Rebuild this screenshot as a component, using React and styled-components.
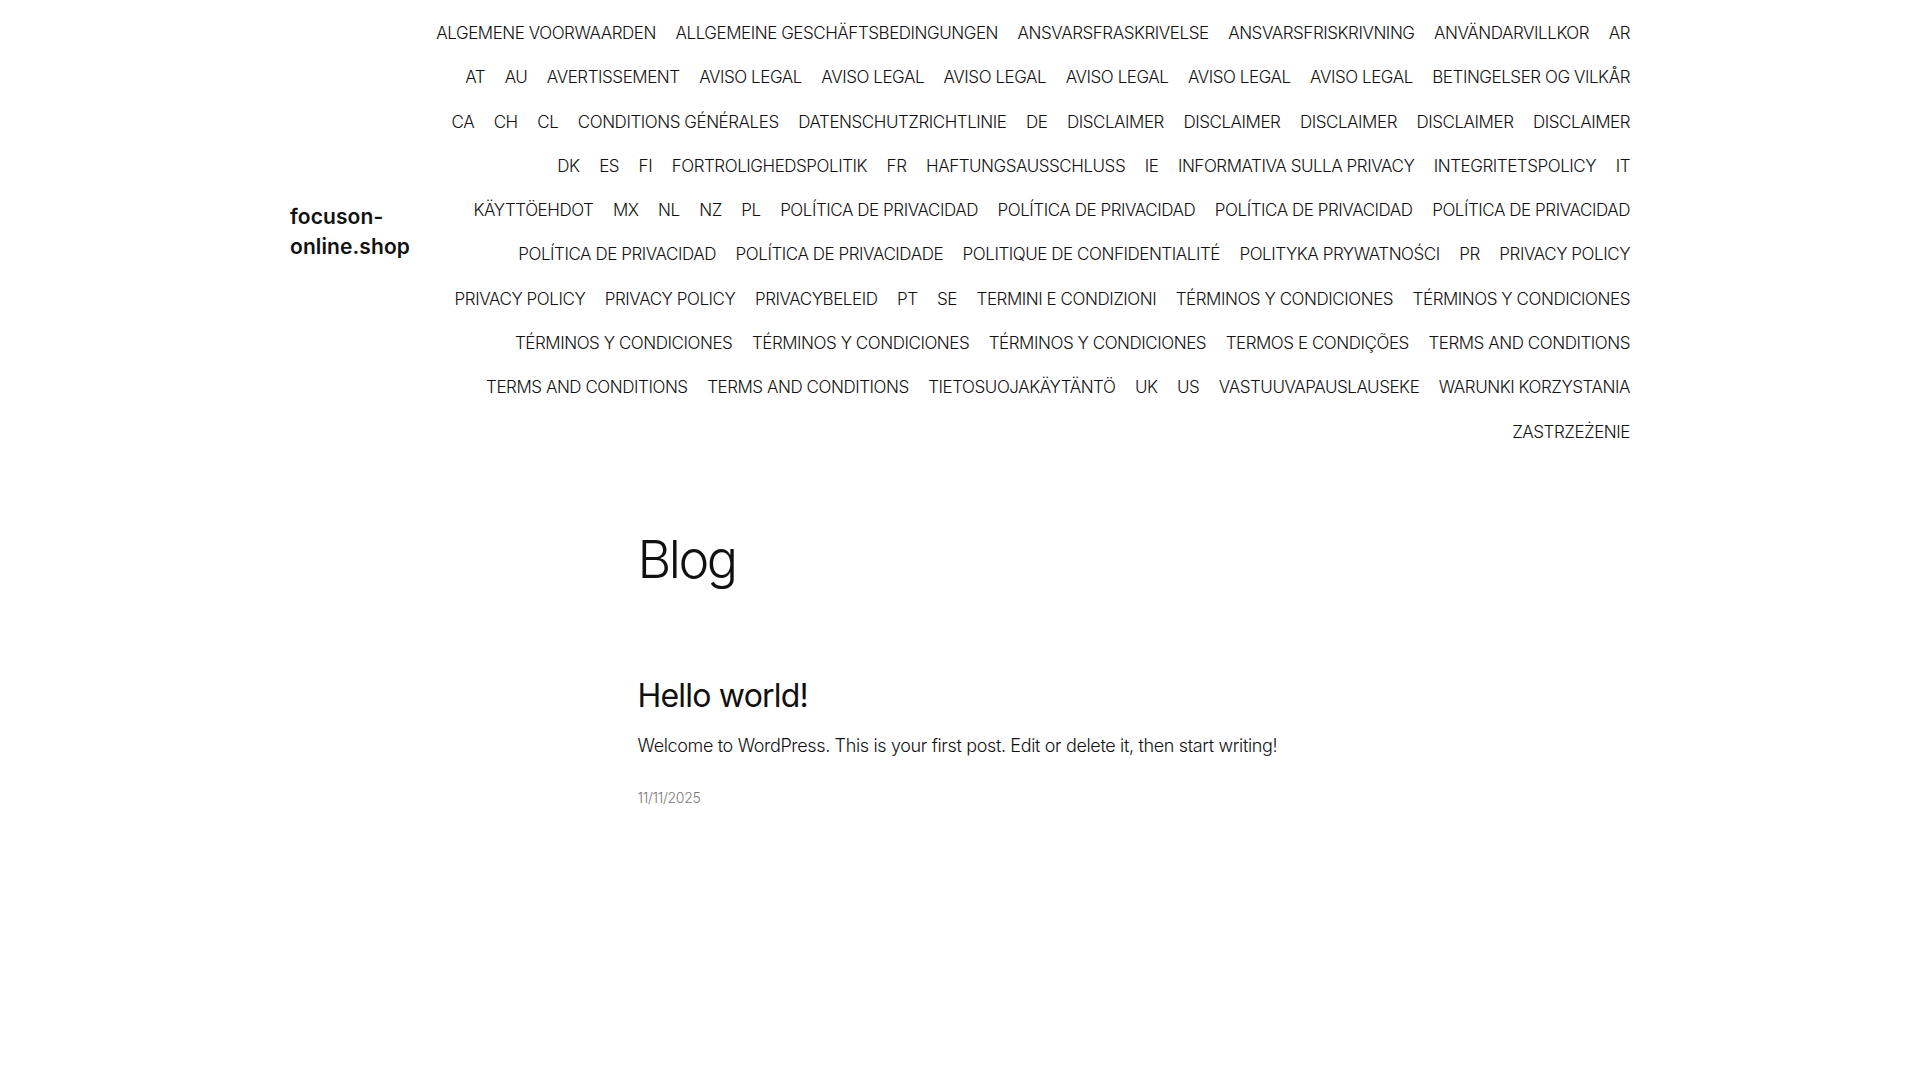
import React from 'react';
import styled, { createGlobalStyle } from 'styled-components';

const GlobalStyle = createGlobalStyle`
    html, body {
        margin: 0;
        padding: 0;
        background: #ffffff;
    }
    body {
        font-family: Inter, "Noto Sans", "DejaVu Sans", sans-serif;
        color: #111111;
    }
    a {
        color: inherit;
        text-decoration: none;
    }
`

const navRows = [
    ['ALGEMENE VOORWAARDEN', 'ALLGEMEINE GESCHÄFTSBEDINGUNGEN', 'ANSVARSFRASKRIVELSE', 'ANSVARSFRISKRIVNING', 'ANVÄNDARVILLKOR', 'AR'],
    ['AT', 'AU', 'AVERTISSEMENT', 'AVISO LEGAL', 'AVISO LEGAL', 'AVISO LEGAL', 'AVISO LEGAL', 'AVISO LEGAL', 'AVISO LEGAL', 'BETINGELSER OG VILKÅR'],
    ['CA', 'CH', 'CL', 'CONDITIONS GÉNÉRALES', 'DATENSCHUTZRICHTLINIE', 'DE', 'DISCLAIMER', 'DISCLAIMER', 'DISCLAIMER', 'DISCLAIMER', 'DISCLAIMER'],
    ['DK', 'ES', 'FI', 'FORTROLIGHEDSPOLITIK', 'FR', 'HAFTUNGSAUSSCHLUSS', 'IE', 'INFORMATIVA SULLA PRIVACY', 'INTEGRITETSPOLICY', 'IT'],
    ['KÄYTTÖEHDOT', 'MX', 'NL', 'NZ', 'PL', 'POLÍTICA DE PRIVACIDAD', 'POLÍTICA DE PRIVACIDAD', 'POLÍTICA DE PRIVACIDAD', 'POLÍTICA DE PRIVACIDAD'],
    ['POLÍTICA DE PRIVACIDAD', 'POLÍTICA DE PRIVACIDADE', 'POLITIQUE DE CONFIDENTIALITÉ', 'POLITYKA PRYWATNOŚCI', 'PR', 'PRIVACY POLICY'],
    ['PRIVACY POLICY', 'PRIVACY POLICY', 'PRIVACYBELEID', 'PT', 'SE', 'TERMINI E CONDIZIONI', 'TÉRMINOS Y CONDICIONES', 'TÉRMINOS Y CONDICIONES'],
    ['TÉRMINOS Y CONDICIONES', 'TÉRMINOS Y CONDICIONES', 'TÉRMINOS Y CONDICIONES', 'TERMOS E CONDIÇÕES', 'TERMS AND CONDITIONS'],
    ['TERMS AND CONDITIONS', 'TERMS AND CONDITIONS', 'TIETOSUOJAKÄYTÄNTÖ', 'UK', 'US', 'VASTUUVAPAUSLAUSEKE', 'WARUNKI KORZYSTANIA'],
    ['ZASTRZEŻENIE'],
];

function App() {
    return (
        <Page>
            <GlobalStyle />
            <Header>
                <SiteTitle href="#">focuson-<br />online.shop</SiteTitle>
                <Nav>
                    {navRows.map((row, i) => (
                        <NavRow key={i}>
                            {row.map((item, j) => (
                                <NavItem key={j} href="#">{item}</NavItem>
                            ))}
                        </NavRow>
                    ))}
                </Nav>
            </Header>
            <Main>
                <PageTitle>Blog</PageTitle>
                <Post>
                    <PostTitle href="#">Hello world!</PostTitle>
                    <Excerpt>Welcome to WordPress. This is your first post. Edit or delete it, then start writing!</Excerpt>
                    <PostDate>11/11/2025</PostDate>
                </Post>
            </Main>
        </Page>
    );
}

export default App;

const Page = styled.div`
    min-height: 1080px;
    background: #ffffff;
`

const Header = styled.header`
    width: 1340px;
    margin: 0 auto;
    padding-top: 20px;
    display: flex;
    align-items: center;
    justify-content: space-between;
    gap: 20px;
`

const SiteTitle = styled.a`
    display: block;
    flex-shrink: 0;
    font-size: 21px;
    font-weight: 600;
    line-height: 30px;
    letter-spacing: 0.1px;
    color: #111111;
    white-space: nowrap;
`

const Nav = styled.nav`
    flex: 1;
    min-width: 0;
    display: flex;
    flex-direction: column;
    align-items: flex-end;
    gap: 18.3px;
`

const NavRow = styled.div`
    display: flex;
    justify-content: flex-end;
    gap: 19.5px;
`

const NavItem = styled.a`
    font-size: 17px;
    font-weight: 300;
    line-height: 26px;
    letter-spacing: -0.45px;
    white-space: nowrap;
    color: #111111;
`

const Main = styled.main`
    width: 645px;
    margin: 0 auto;
    padding-top: 82px;
`

const PageTitle = styled.h1`
    margin: 0;
    font-size: 52px;
    font-weight: 300;
    line-height: 66px;
    letter-spacing: -2.5px;
`

const Post = styled.article`
    margin-top: 84px;
    display: flex;
    flex-direction: column;
`

const PostTitle = styled.a`
    display: block;
    font-size: 32px;
    font-weight: 400;
    line-height: 38px;
    letter-spacing: -0.8px;
`

const Excerpt = styled.p`
    margin: 16px 0 0;
    font-size: 18px;
    font-weight: 300;
    line-height: 29px;
    letter-spacing: -0.35px;
`

const PostDate = styled.time`
    display: block;
    margin-top: 27px;
    font-size: 14px;
    font-weight: 300;
    line-height: 22px;
    letter-spacing: -0.3px;
    color: #777777;
`
